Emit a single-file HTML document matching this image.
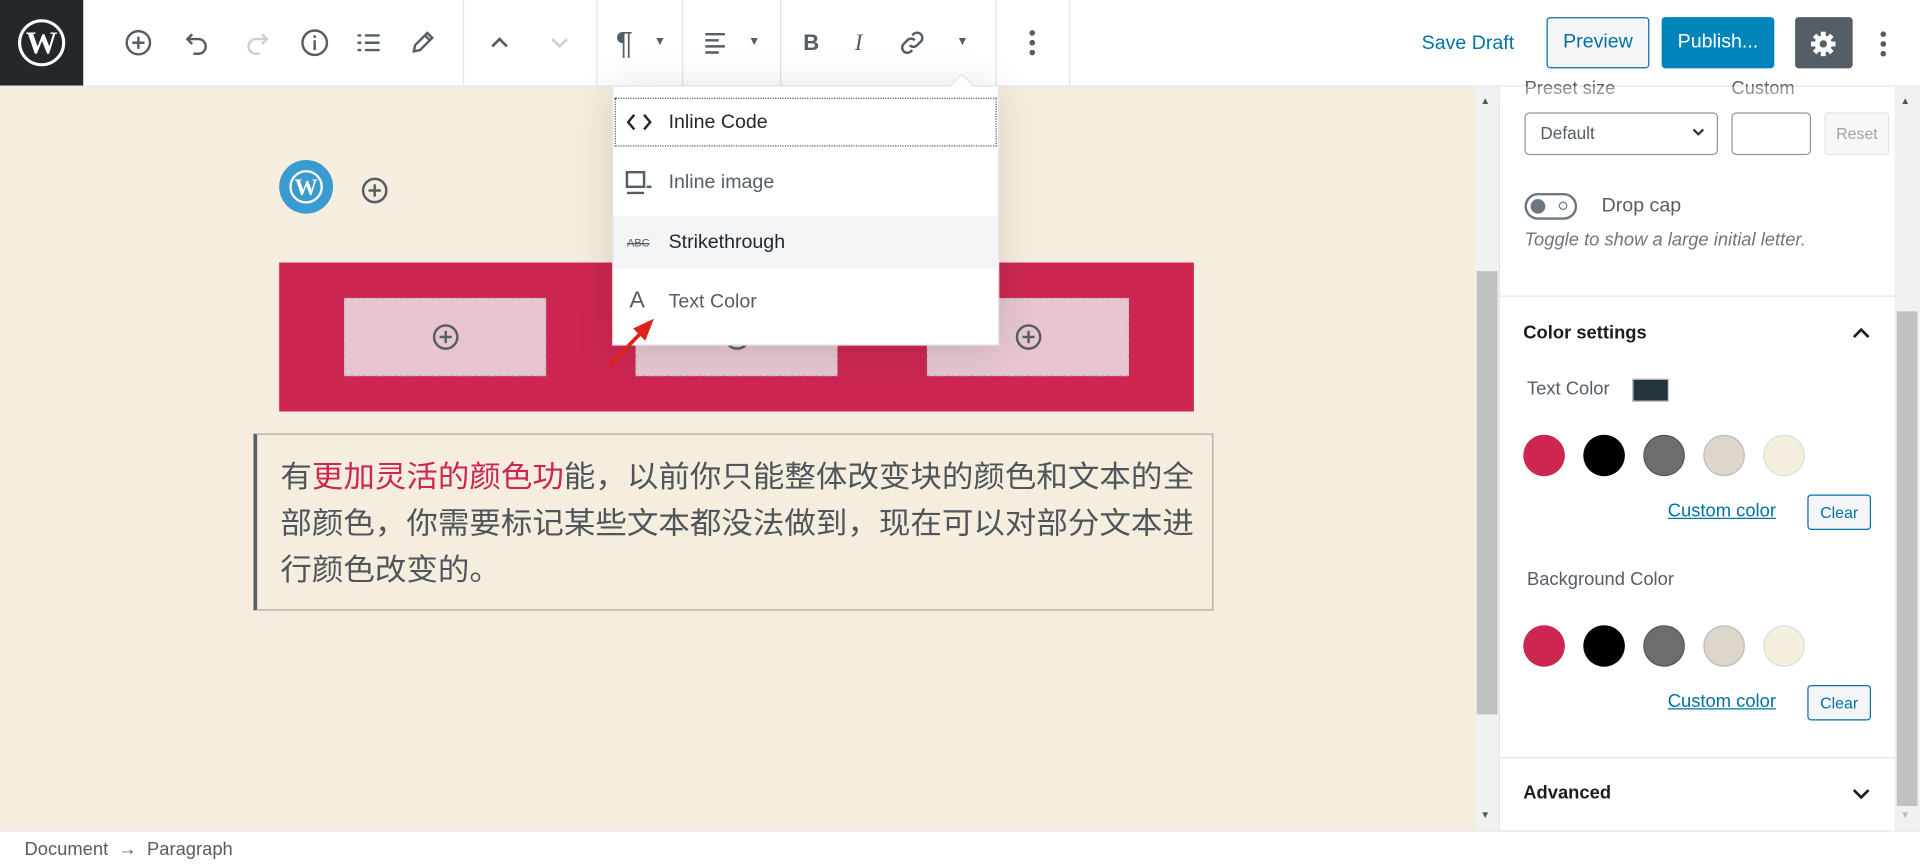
<!DOCTYPE html>
<html><head><meta charset="utf-8">
<style>
html,body{margin:0;padding:0;width:1920px;height:867px;overflow:hidden;background:#fff}
#w{position:absolute;left:0;top:0;width:1568px;height:710px;transform:scale(1.22449,1.22113);transform-origin:0 0;font-family:"Liberation Sans","Noto Sans CJK SC",sans-serif;color:#555d66}
.a{position:absolute}
.sep{position:absolute;top:0;width:1px;height:70px;background:#e2e4e7}
.ic{position:absolute;top:23px}
.circ{position:absolute;width:34px;height:34px;border-radius:50%;box-sizing:border-box}
.lbl{position:absolute;font-size:16px;color:#555d66}
</style></head><body><div id="w">
<div class="a" style="left:0;top:0;width:1568px;height:70px;background:#fff;border-bottom:1px solid #e2e4e7"></div>
<div class="a" style="left:0;top:0;width:68px;height:70px;background:#23282d"></div>
<svg class="a" style="left:14px;top:15px" width="40" height="40" viewBox="0 0 40 40"><circle cx="20" cy="20" r="18" fill="none" stroke="#fff" stroke-width="2.5"/><text x="20" y="29" text-anchor="middle" font-family="Liberation Serif" font-weight="bold" font-size="26" fill="#fff">W</text></svg>
<svg class="ic" style="left:101px" width="24" height="24" viewBox="0 0 24 24" fill="none" stroke="#555d66" stroke-width="2"><circle cx="12" cy="12" r="9.5"/><path d="M12 7v10M7 12h10"/></svg>
<svg class="ic" style="left:149px" width="24" height="24" viewBox="0 0 24 24" fill="none" stroke="#555d66" stroke-width="2"><path d="M8 5L4 9l4 4M4 9h9a6 6 0 010 12H9"/></svg>
<svg class="ic" style="left:198px" width="24" height="24" viewBox="0 0 24 24" fill="none" stroke="#ccd0d4" stroke-width="2"><path d="M16 5l4 4-4 4M20 9h-9a6 6 0 000 12h3"/></svg>
<svg class="ic" style="left:245px" width="24" height="24" viewBox="0 0 24 24" fill="none" stroke="#555d66" stroke-width="2"><circle cx="12" cy="12" r="10"/><path d="M12 10v8M12 6v2"/></svg>
<svg class="ic" style="left:289px" width="24" height="24" viewBox="0 0 24 24" fill="none" stroke="#555d66" stroke-width="2"><path d="M3 6h3M3 12h3M3 18h3M9 6h12M9 12h12M9 18h12"/></svg>
<svg class="ic" style="left:333px" width="24" height="24" viewBox="0 0 24 24" fill="none" stroke="#555d66" stroke-width="2"><path d="M5 19l1-5L16 4l4 4-10 10zM14 6l4 4"/></svg>
<div class="sep" style="left:378px"></div>
<svg class="ic" style="left:396px" width="24" height="24" viewBox="0 0 24 24" fill="none" stroke="#555d66" stroke-width="2.2"><path d="M6 15l6-6 6 6"/></svg>
<svg class="ic" style="left:445px" width="24" height="24" viewBox="0 0 24 24" fill="none" stroke="#ccd0d4" stroke-width="2.2"><path d="M6 9l6 6 6-6"/></svg>
<div class="sep" style="left:487px"></div>
<div class="a" style="left:503px;top:20px;font-size:26px;color:#555d66">¶</div>
<div class="a" style="left:534px;top:29px;font-size:10px">▼</div>
<div class="sep" style="left:557px"></div>
<svg class="ic" style="left:573px" width="24" height="24" viewBox="0 0 24 24" fill="none" stroke="#555d66" stroke-width="2"><path d="M3 5h16M3 10h11M3 15h16M3 20h11"/></svg>
<div class="a" style="left:611px;top:29px;font-size:10px">▼</div>
<div class="sep" style="left:637px"></div>
<div class="a" style="left:656px;top:25px;font-size:18px;font-weight:bold">B</div>
<div class="a" style="left:698px;top:25px;font-size:19px;font-style:italic;font-family:'Liberation Serif'">I</div>
<svg class="ic" style="left:733px" width="24" height="24" viewBox="0 0 24 24" fill="none" stroke="#555d66" stroke-width="2"><path d="M10 14a4 4 0 006 0l3-3a4 4 0 00-6-6l-1 1M14 10a4 4 0 00-6 0l-3 3a4 4 0 006 6l1-1"/></svg>
<div class="a" style="left:781px;top:29px;font-size:10px">▼</div>
<div class="sep" style="left:813px"></div>
<svg class="ic" style="left:831px" width="24" height="24" viewBox="0 0 24 24" fill="#555d66"><circle cx="12" cy="4" r="2.3"/><circle cx="12" cy="12" r="2.3"/><circle cx="12" cy="20" r="2.3"/></svg>
<div class="sep" style="left:873px"></div>
<div class="a" style="left:1161px;top:27px;font-size:16px;color:#0073aa">Save Draft</div>
<div class="a" style="left:1263px;top:14px;width:82px;height:40px;border:1px solid #0071a1;border-radius:3px;background:#f3f5f6;color:#0071a1;font-size:16px;text-align:center;line-height:40px">Preview</div>
<div class="a" style="left:1357px;top:14px;width:92px;height:42px;border-radius:3px;background:#0085ba;color:#fff;font-size:16px;text-align:center;line-height:42px">Publish...</div>
<div class="a" style="left:1466px;top:14px;width:47px;height:42px;border-radius:3px;background:#555d66"></div>
<svg class="a" style="left:1477px;top:24px" width="24" height="24" viewBox="0 0 24 24"><g fill="#fff"><circle cx="12" cy="12" r="7"/><rect x="10" y="2" width="4" height="20"/><rect x="2" y="10" width="20" height="4"/><rect x="10" y="2" width="4" height="20" transform="rotate(45 12 12)"/><rect x="10" y="2" width="4" height="20" transform="rotate(-45 12 12)"/></g><circle cx="12" cy="12" r="3" fill="#555d66"/></svg>
<svg class="a" style="left:1526px;top:24px" width="24" height="24" viewBox="0 0 24 24" fill="#555d66"><circle cx="12" cy="4" r="2.3"/><circle cx="12" cy="12" r="2.3"/><circle cx="12" cy="20" r="2.3"/></svg>

<div class="a" style="left:0;top:71px;width:1205px;height:609px;background:#f5eedf"></div>
<div class="a" style="left:1205px;top:71px;width:19px;height:609px;background:#f1f1f1"></div>
<div class="a" style="left:1206px;top:222px;width:17px;height:363px;background:#c1c1c1"></div>
<div class="a" style="left:1209px;top:78px;font-size:8px;color:#555">▲</div>
<div class="a" style="left:1209px;top:663px;font-size:8px;color:#555">▼</div>
<div class="a" style="left:228px;top:131px;width:44px;height:44px;border-radius:50%;background:#3a9bd0"></div>
<svg class="a" style="left:235px;top:138px" width="30" height="30" viewBox="0 0 40 40"><circle cx="20" cy="20" r="17" fill="none" stroke="#fff" stroke-width="2.5"/><text x="20" y="29" text-anchor="middle" font-family="Liberation Serif" font-weight="bold" font-size="25" fill="#fff">W</text></svg>
<svg class="a" style="left:294px;top:144px" width="24" height="24" viewBox="0 0 24 24" fill="none" stroke="#555d66" stroke-width="2"><circle cx="12" cy="12" r="9.5"/><path d="M12 7v10M7 12h10"/></svg>
<div class="a" style="left:228px;top:215px;width:747px;height:122px;background:#cc2651"></div>
<div class="a" style="left:281px;top:244px;width:165px;height:64px;background:#e7c6d1;border:1px dashed #bbb;box-sizing:border-box"></div>
<div class="a" style="left:519px;top:244px;width:165px;height:64px;background:#e7c6d1;border:1px dashed #bbb;box-sizing:border-box"></div>
<div class="a" style="left:757px;top:244px;width:165px;height:64px;background:#e7c6d1;border:1px dashed #bbb;box-sizing:border-box"></div>
<svg class="a" style="left:352px;top:264px" width="24" height="24" viewBox="0 0 24 24" fill="none" stroke="#555d66" stroke-width="2"><circle cx="12" cy="12" r="9.5"/><path d="M12 7v10M7 12h10"/></svg>
<svg class="a" style="left:590px;top:264px" width="24" height="24" viewBox="0 0 24 24" fill="none" stroke="#555d66" stroke-width="2"><circle cx="12" cy="12" r="9.5"/><path d="M12 7v10M7 12h10"/></svg>
<svg class="a" style="left:828px;top:264px" width="24" height="24" viewBox="0 0 24 24" fill="none" stroke="#555d66" stroke-width="2"><circle cx="12" cy="12" r="9.5"/><path d="M12 7v10M7 12h10"/></svg>
<div class="a" style="left:207px;top:355px;width:784px;height:145px;border:1px solid #a9a9a9;border-left:3px solid #555d66;box-sizing:border-box"></div>
<div class="a" style="left:229px;top:371px;font-size:24.5px;line-height:38px;color:#50555b;white-space:nowrap;font-family:'Noto Sans CJK SC',sans-serif;transform:scaleX(1.05);transform-origin:0 0">有<span style="color:#cc2651">更加灵活的颜色功</span>能，以前你只能整体改变块的颜色和文本的全<br>部颜色，你需要标记某些文本都没法做到，现在可以对部分文本进<br>行颜色改变的。</div>

<div class="a" style="left:500px;top:70px;width:316px;height:213px;background:#fff;border:1px solid #e2e4e7;box-shadow:0 3px 30px rgba(25,30,35,.15);box-sizing:border-box"></div>
<div class="a" style="left:779px;top:63px;width:12px;height:12px;background:#fff;border-left:1px solid #e2e4e7;border-top:1px solid #e2e4e7;transform:rotate(45deg)"></div>
<div class="a" style="left:502px;top:80px;width:312px;height:40px;border:1px dotted #555;box-sizing:border-box"></div>
<div class="a" style="left:501px;top:177px;width:314px;height:43px;background:#f3f4f5"></div>
<svg class="a" style="left:510px;top:90px" width="24" height="20" viewBox="0 0 24 20" fill="none" stroke="#23282d" stroke-width="2"><path d="M8 4L3 10l5 6M16 4l5 6-5 6"/></svg>
<svg class="a" style="left:510px;top:139px" width="24" height="22" viewBox="0 0 24 22" fill="none" stroke="#555d66" stroke-width="2"><rect x="2" y="2" width="14" height="12"/><path d="M2 19h14M18 14h4"/></svg>
<div class="a" style="left:512px;top:194px;font-size:9px;color:#555d66;text-decoration:line-through">ABC</div>
<div class="a" style="left:514px;top:236px;font-size:19px;color:#555d66">A</div>
<div class="lbl" style="left:546px;top:92px;color:#23282d">Inline Code</div>
<div class="lbl" style="left:546px;top:141px">Inline image</div>
<div class="lbl" style="left:546px;top:190px;color:#23282d">Strikethrough</div>
<div class="lbl" style="left:546px;top:239px">Text Color</div>
<svg class="a" style="left:490px;top:250px" width="60" height="60" viewBox="0 0 60 60"><path d="M8 49L36 20" stroke="#e0201a" stroke-width="3"/><path d="M44 11L27 19l10 10z" fill="#e0201a"/></svg>

<div class="a" style="left:1224px;top:71px;width:323px;height:609px;background:#fff;border-left:1px solid #e2e4e7"></div>
<div class="a" style="left:1547px;top:71px;width:21px;height:609px;background:#f1f1f1"></div>
<div class="a" style="left:1549px;top:255px;width:17px;height:405px;background:#c1c1c1"></div>
<div class="a" style="left:1552px;top:78px;font-size:8px;color:#555">▲</div>
<div class="a" style="left:1552px;top:663px;font-size:8px;color:#bbb">▼</div>
<div class="a" style="left:1245px;top:64px;font-size:15px;color:#555d66">Preset size</div>
<div class="a" style="left:1414px;top:64px;font-size:15px;color:#555d66">Custom</div>
<div class="a" style="left:1224px;top:71px;width:323px;height:12px;background:#fff;opacity:.35"></div>
<div class="a" style="left:1245px;top:92px;width:158px;height:35px;border:1px solid #8d96a0;border-radius:4px;box-sizing:border-box;font-size:14px;line-height:33px;padding-left:12px;color:#555d66">Default</div>
<svg class="a" style="left:1381px;top:103px" width="12" height="10" viewBox="0 0 12 10" fill="none" stroke="#333" stroke-width="1.8"><path d="M2 3l4 4 4-4"/></svg>
<div class="a" style="left:1414px;top:92px;width:65px;height:35px;border:1px solid #8d96a0;border-radius:4px;box-sizing:border-box"></div>
<div class="a" style="left:1490px;top:92px;width:53px;height:35px;border:1px solid #e2e4e7;border-radius:3px;box-sizing:border-box;background:#f7f7f7;font-size:13px;line-height:33px;text-align:center;color:#a0a5aa">Reset</div>
<div class="a" style="left:1245px;top:158px;width:43px;height:22px;border:2px solid #6c7781;border-radius:12px;box-sizing:border-box"></div>
<div class="a" style="left:1250px;top:163px;width:12px;height:12px;border-radius:50%;background:#6c7781"></div>
<div class="a" style="left:1273px;top:165px;width:5px;height:5px;border-radius:50%;border:1.5px solid #6c7781"></div>
<div class="a" style="left:1308px;top:160px;font-size:16px;color:#555d66">Drop cap</div>
<div class="a" style="left:1245px;top:188px;font-size:15px;font-style:italic;color:#6c7781">Toggle to show a large initial letter.</div>
<div class="a" style="left:1225px;top:242px;width:322px;height:1px;background:#e2e4e7"></div>
<div class="a" style="left:1244px;top:264px;font-size:15px;font-weight:bold;color:#191e23">Color settings</div>
<svg class="a" style="left:1511px;top:265px" width="18" height="14" viewBox="0 0 18 14" fill="none" stroke="#191e23" stroke-width="2.2"><path d="M3 11l6-6 6 6"/></svg>
<div class="a" style="left:1247px;top:310px;font-size:15px;color:#555d66">Text Color</div>
<div class="a" style="left:1333px;top:310px;width:30px;height:19px;background:#23353f;border:1px solid #ccd0d4;box-sizing:border-box"></div>
<div class="circ" style="left:1244px;top:356px;background:#cc2651"></div>
<div class="circ" style="left:1293px;top:356px;background:#000"></div>
<div class="circ" style="left:1342px;top:356px;background:#6d6d6d;border:1px solid #555"></div>
<div class="circ" style="left:1391px;top:356px;background:#dcd7ca;border:1px solid #bbb"></div>
<div class="circ" style="left:1440px;top:356px;background:#f5efe0;border:1px solid #ddd"></div>
<div class="a" style="left:1362px;top:410px;font-size:15px;color:#0071a1;text-decoration:underline">Custom color</div>
<div class="a" style="left:1476px;top:405px;width:52px;height:29px;border:1px solid #0071a1;border-radius:3px;box-sizing:border-box;background:#f3f5f6;color:#0071a1;font-size:13px;line-height:27px;text-align:center">Clear</div>
<div class="a" style="left:1247px;top:466px;font-size:15px;color:#555d66">Background Color</div>
<div class="circ" style="left:1244px;top:512px;background:#cc2651"></div>
<div class="circ" style="left:1293px;top:512px;background:#000"></div>
<div class="circ" style="left:1342px;top:512px;background:#6d6d6d;border:1px solid #555"></div>
<div class="circ" style="left:1391px;top:512px;background:#dcd7ca;border:1px solid #bbb"></div>
<div class="circ" style="left:1440px;top:512px;background:#f5efe0;border:1px solid #ddd"></div>
<div class="a" style="left:1362px;top:566px;font-size:15px;color:#0071a1;text-decoration:underline">Custom color</div>
<div class="a" style="left:1476px;top:561px;width:52px;height:29px;border:1px solid #0071a1;border-radius:3px;box-sizing:border-box;background:#f3f5f6;color:#0071a1;font-size:13px;line-height:27px;text-align:center">Clear</div>
<div class="a" style="left:1225px;top:620px;width:322px;height:1px;background:#e2e4e7"></div>
<div class="a" style="left:1244px;top:641px;font-size:15px;font-weight:bold;color:#191e23">Advanced</div>
<svg class="a" style="left:1511px;top:643px" width="18" height="14" viewBox="0 0 18 14" fill="none" stroke="#191e23" stroke-width="2.2"><path d="M3 4l6 6 6-6"/></svg>

<div class="a" style="left:0;top:680px;width:1568px;height:30px;background:#fff;border-top:1px solid #e2e4e7"></div>
<div class="a" style="left:20px;top:687px;font-size:15px;color:#555d66">Document &nbsp;→&nbsp; Paragraph</div>
</div></body></html>
